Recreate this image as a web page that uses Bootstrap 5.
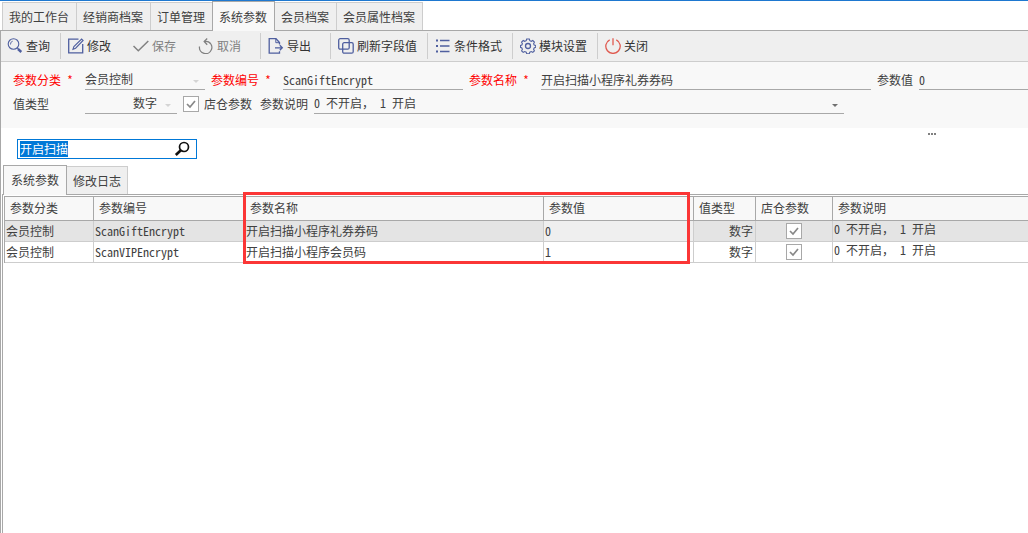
<!DOCTYPE html>
<html lang="zh-CN">
<head>
<meta charset="utf-8">
<meta name="viewport" content="width=device-width, initial-scale=1">
<title>系统参数</title>
<link href="https://cdn.jsdelivr.net/npm/bootstrap@5.3.0/dist/css/bootstrap.min.css" rel="stylesheet">
<style>
  :root { --line: #a8a8a8; --soft: #cdcdcd; --bar: #efefef; --pane: #f8f8f8; --ink: #404040; --icon: #4f5f9f; }
  body { font-family: "Noto Sans Mono CJK SC", "Noto Sans CJK SC", monospace; font-size: 12px; line-height: 16px; color: var(--ink); background: #fff; }
  button, input, select { font: inherit; color: inherit; }
  ::selection { background: #0078d7; color: #fff; }

  .doc-tabs { border-top: 1px solid #1e78d0; border-bottom: 1px solid var(--line); height: 31px; padding-left: 2px; }
  .doc-tabs .nav-link { height: 28px; padding: 1px 7px 0 6px; color: var(--ink); background: var(--bar); border: 1px solid var(--soft); border-right-width: 0; border-bottom: 0; border-radius: 0; }
  .doc-tabs .nav-item:last-child .nav-link { border-right-width: 1px; }
  .doc-tabs .nav-link.active { height: 30px; margin-bottom: -1px; background: var(--pane); border-color: var(--line); border-right-width: 1px; color: var(--ink); }
  .doc-tabs .nav-item:has(.active) + .nav-item .nav-link { border-left: 0; }

  .workspace { border-left: 1px solid var(--line); min-height: calc(100vh - 31px); }
  .tools { background: var(--bar); border-bottom: 1px solid var(--soft); height: 31px; padding: 2px 0; }
  .tool-group { border-right: 1px solid var(--soft); }
  .tool-group:last-child { border-right: 0; }
  .tool { padding: 0 10px 0 7px; gap: 4px; font-family: "Noto Sans CJK SC", sans-serif; font-size: 12px; line-height: 16px; border: 0; border-radius: 0; color: #333; }
  .tool-group:first-child .tool { padding-left: 6px; }
  .tool:hover { background: #dfe6f2; }
  .tool:disabled { color: #808080; opacity: 1; border: 0; }
  .tool-even .tool { min-width: 65px; }
  .tool-even { padding-right: 4px; }
  .tool svg { width: 16px; height: 16px; margin-right: -1px; fill: none; stroke: var(--icon); stroke-width: 1.3; flex: none; }
  .tool:disabled svg { stroke: #808080; }
  .tool svg.power { stroke: #e05a50; }

  .params { background: var(--pane); padding: 8px 0 10px 12px; overflow: hidden; }
  .line-row { height: 24px; padding-bottom: 4px; }
  .caption { width: 72px; flex: none; }
  .caption-red { color: #f00; }
  .caption-short { padding-right: 6px; flex: none; }
  .field { height: 20px; padding: 1px 0 2px; border: 0; border-bottom: 1px solid var(--line); border-radius: 0; background: transparent; outline: 0; margin-right: 6px; flex: none; }
  select.field { appearance: none; background: url("data:image/svg+xml,%3Csvg xmlns='http://www.w3.org/2000/svg' width='6' height='3'%3E%3Cpath d='M0 0h6L3 3z' fill='%23d4d4d4'/%3E%3C/svg%3E") no-repeat right 6px top 10px; }
  select.field.strong { background-image: url("data:image/svg+xml,%3Csvg xmlns='http://www.w3.org/2000/svg' width='6' height='3'%3E%3Cpath d='M0 0h6L3 3z' fill='%23707070'/%3E%3C/svg%3E"); }
  .w-kind { width: 120px; }
  .w-code { width: 180px; }
  .w-name { width: 330px; }
  .w-type { width: 92px; padding-right: 20px; text-align-last: right; }
  .w-note { width: 530px; }
  .tick { appearance: none; width: 16px; height: 16px; margin: 0; border: 1px solid var(--line); flex: none; background: #fff url("data:image/svg+xml,%3Csvg xmlns='http://www.w3.org/2000/svg' width='14' height='14'%3E%3Cpath d='M3 7l3 3 5-6' fill='none' stroke='%23888' stroke-width='1.7'/%3E%3C/svg%3E") no-repeat center; }
  .tick-label { padding: 0 8px 0 5px; flex: none; }

  .more { padding: 4px 0 2px; border: 0; background: none; margin-right: 92px; line-height: 0; }
  .finder { width: 180px; height: 20px; margin: 2px 0 6px 16px; border: 1px solid #0078d7; background: #fff; }
  .finder input { border: 0; outline: 0; padding: 0 0 0 2px; min-width: 0; height: 16px; }
  .finder button { border: 0; background: none; padding: 0 6px 0 0; line-height: 0; }

  .page-tabs { padding-left: 2px; border: 0; }
  .page-tabs .nav-link { height: 28px; margin-top: 1px; padding: 1px 6px 0 6px; color: var(--ink); background: var(--bar); border: 1px solid var(--soft); border-left: 0; border-bottom: 0; border-radius: 0; }
  .page-tabs .nav-link.active { height: 30px; margin: 0 0 -1px; padding: 0 7px 0 7px; color: var(--ink); background: var(--pane); border: 1px solid var(--line); border-bottom: 0; }
  .page-body { margin-left: 1px; padding: 1px 0 0 1px; border: 1px solid var(--line); border-width: 1px 0 0 1px; min-height: calc(100vh - 194px); }

  .grid-wrap { border: 1px solid var(--line); border-width: 1px 0 0 1px; }
  .grid { table-layout: fixed; width: 100%; border-collapse: separate; border-spacing: 0; white-space: nowrap; }
  .grid th { height: 24px; padding: 0 5px; font-weight: 400; background: var(--pane); border-right: 1px solid var(--line); border-bottom: 1px solid var(--line); }
  .grid td { height: 21px; padding: 0 2px 0 1px; border-right: 1px solid var(--soft); border-bottom: 1px solid var(--soft); }
  .grid th:last-child, .grid td:last-child { border-right: 0; }
  .grid td:last-child { padding-bottom: 3px; }
  .grid .chosen td { background: #e4e4e4; }
  .grid .chosen .focused { background: #efefef; }
  .grid .tick { display: block; margin: 0 auto; }
  .callout { left: 238px; top: -5px; width: 447px; height: 72px; border: 3px solid #fb3636; pointer-events: none; }
</style>
</head>
<body>
<ul class="nav doc-tabs flex-nowrap align-items-end">
  <li class="nav-item"><a class="nav-link d-flex align-items-center" href="#">我的工作台</a></li>
  <li class="nav-item"><a class="nav-link d-flex align-items-center" href="#">经销商档案</a></li>
  <li class="nav-item"><a class="nav-link d-flex align-items-center" href="#">订单管理</a></li>
  <li class="nav-item"><a class="nav-link active d-flex align-items-center" href="#" aria-current="page">系统参数</a></li>
  <li class="nav-item"><a class="nav-link d-flex align-items-center" href="#">会员档案</a></li>
  <li class="nav-item"><a class="nav-link d-flex align-items-center" href="#">会员属性档案</a></li>
</ul>

<main class="workspace">
  <div class="tools d-flex" role="toolbar" aria-label="工具栏">
    <div class="tool-group d-flex">
      <button type="button" class="btn tool d-flex align-items-center"><svg viewBox="0 0 16 16"><circle cx="6.500" cy="6" r="5.300" stroke-width="1.100"/><path d="M3.500 6.500a3 3 0 0 1 2.200-3.300" stroke-width=".9"/><path d="M10.200 9.800l1.200 1"/><path d="M11 11l3.300 3" stroke-width="2.400"/></svg>查询</button>
    </div>
    <div class="tool-group tool-even d-flex">
      <button type="button" class="btn tool d-flex align-items-center"><svg viewBox="0 0 16 16"><path d="M10.500 1.200H.7v13.600h14V6"/><path d="M5 11.200l.9-2.700L13.600 1l1.500 1.500L7.600 10.200z" stroke-width="1.100"/></svg>修改</button>
      <button type="button" class="btn tool d-flex align-items-center" disabled><svg viewBox="0 0 16 16"><path d="M0.500 8l4.800 4.800L15.300 3" stroke-width="1.500"/></svg>保存</button>
      <button type="button" class="btn tool d-flex align-items-center" disabled><svg viewBox="0 0 16 16"><path d="M1.500 8.500a6.200 6.200 0 1 0 9-4.600Q9 3.200 6.500 3.500"/><path d="M9.200 .5L6.200 3.500l3 3.200"/></svg>取消</button>
    </div>
    <div class="tool-group tool-even d-flex">
      <button type="button" class="btn tool d-flex align-items-center"><svg viewBox="0 0 16 16"><path d="M11.500 6.500V4.500L8 .7H1.200v14.500h10.300v-2"/><path d="M7.800 .7v4h3.700" stroke-width="1"/><path d="M7 9.800h7M11.800 7.300l2.500 2.500-2.500 2.500"/></svg>导出</button>
    </div>
    <div class="tool-group d-flex">
      <button type="button" class="btn tool d-flex align-items-center"><svg viewBox="0 0 16 16"><rect x=".7" y=".7" width="10.500" height="10.500" rx="1.500"/><rect x="4.700" y="4.700" width="10.500" height="10.500" rx="1.500"/></svg>刷新字段值</button>
    </div>
    <div class="tool-group d-flex">
      <button type="button" class="btn tool d-flex align-items-center"><svg viewBox="0 0 16 16"><path d="M5 2.500h9.500M5 8h9.500M5 13.500h9.500"/><path d="M1 2.500h2M1 8h2M1 13.500h2" stroke-width="2"/></svg>条件格式</button>
    </div>
    <div class="tool-group d-flex">
      <button type="button" class="btn tool d-flex align-items-center"><svg viewBox="0 0 16 16"><circle cx="8" cy="8" r="2.500"/><path d="M6.700 1h2.600l.5 1.700 1.500.600 1.500-.8 1.600 1.700-.8 1.600.6 1.300 1.500.4v1.800l-1.500.6-.6 1.400.8 1.500-1.600 1.600-1.500-.8-1.500.6-.5 1.500H6.700l-.5-1.500-1.500-.6-1.500.8-1.600-1.600.8-1.500-.6-1.400-1.300-.6V7.500l1.300-.4.6-1.300-.8-1.600 1.600-1.700 1.500.8 1.500-.6z" stroke-width="1.100"/></svg>模块设置</button>
    </div>
    <div class="tool-group d-flex">
      <button type="button" class="btn tool d-flex align-items-center"><svg class="power" viewBox="0 0 16 16"><path d="M4.700 1.800a7.200 7.200 0 1 0 6.600 0M8 .3v7"/></svg>关闭</button>
    </div>
  </div>

  <form class="params">
    <div class="line-row d-flex align-items-center">
      <label class="caption caption-red" for="kind">参数分类 *</label>
      <select class="field w-kind" id="kind"><option>会员控制</option></select>
      <label class="caption caption-red" for="code">参数编号 *</label>
      <input class="field w-code" id="code" type="text" value="ScanGiftEncrypt">
      <label class="caption caption-red" for="name">参数名称 *</label>
      <input class="field w-name" id="name" type="text" value="开启扫描小程序礼券券码">
      <label class="caption-short" for="val">参数值</label>
      <input class="field flex-fill me-0" id="val" type="text" size="8" value="0">
    </div>
    <div class="line-row d-flex align-items-center">
      <label class="caption" for="type">值类型</label>
      <select class="field w-type" id="type"><option>数字</option></select>
      <input class="tick" id="store" type="checkbox" checked>
      <label class="tick-label" for="store">店仓参数</label>
      <label class="caption-short" for="note">参数说明</label>
      <select class="field strong w-note" id="note"><option>0 不开启， 1 开启</option></select>
    </div>
  </form>

  <div class="d-flex justify-content-end">
    <button type="button" class="more" aria-label="更多"><svg width="8" height="2" viewBox="0 0 8 2" fill="#808080"><path d="M0 0h2v2H0zM3 0h2v2H3zM6 0h2v2H6z"/></svg></button>
  </div>

  <div class="finder d-flex align-items-center">
    <input class="flex-fill" id="find" type="text" value="开启扫描" aria-label="查找">
    <button type="button" aria-label="搜索"><svg width="16" height="16" viewBox="0 0 16 16" fill="none" stroke="#111"><circle cx="10" cy="6" r="4.500" stroke-width="1.700"/><path d="M6.800 9.200L1.800 14" stroke-width="2.600"/></svg></button>
  </div>

  <ul class="nav page-tabs flex-nowrap">
    <li class="nav-item"><a class="nav-link active d-flex align-items-center" href="#">系统参数</a></li>
    <li class="nav-item"><a class="nav-link d-flex align-items-center" href="#">修改日志</a></li>
  </ul>

  <div class="page-body">
    <div class="grid-wrap position-relative">
      <table class="grid">
        <colgroup><col style="width:89px"><col style="width:151px"><col style="width:299px"><col style="width:150px"><col style="width:62px"><col style="width:77px"><col></colgroup>
        <thead>
          <tr><th>参数分类</th><th>参数编号</th><th>参数名称</th><th>参数值</th><th>值类型</th><th>店仓参数</th><th>参数说明</th></tr>
        </thead>
        <tbody>
          <tr class="chosen"><td>会员控制</td><td>ScanGiftEncrypt</td><td>开启扫描小程序礼券券码</td><td class="focused">0</td><td class="text-end">数字</td><td><input class="tick" type="checkbox" checked aria-label="店仓参数"></td><td>0 不开启， 1 开启</td></tr>
          <tr><td>会员控制</td><td>ScanVIPEncrypt</td><td>开启扫描小程序会员码</td><td>1</td><td class="text-end">数字</td><td><input class="tick" type="checkbox" checked aria-label="店仓参数"></td><td>0 不开启， 1 开启</td></tr>
        </tbody>
      </table>
      <div class="callout position-absolute"></div>
    </div>
  </div>
</main>

<script src="https://cdn.jsdelivr.net/npm/bootstrap@5.3.0/dist/js/bootstrap.bundle.min.js"></script>
<script>
  document.getElementById('find').focus();
  document.getElementById('find').select();
</script>
</body>
</html>
